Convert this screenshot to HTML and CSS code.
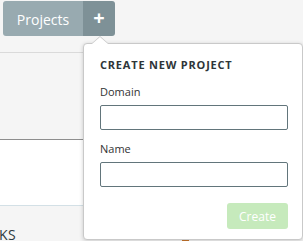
FILE: index.html
```html
<!DOCTYPE html>
<html>
<head>
<meta charset="utf-8">
<link rel="stylesheet" href="styles.css">
</head>
<body>
<div class="page">
  <div class="topbar">
    <div class="btn-group">
      <div class="btn btn-projects">Projects</div>
      <div class="btn btn-plus">+</div>
    </div>
  </div>
  <div class="band band-gray"></div>
  <div class="band band-white"></div>
  <div class="band band-bottom">
    <div class="tab-label">KS</div>
    <div class="legend">
      <span class="swatch"></span>
      <span class="legend-text">WWW HHHHHHH</span>
    </div>
  </div>

  <div class="popover">
    <div class="popover-title">Create new project</div>
    <label class="field-label">Domain</label>
    <div class="field-input"></div>
    <label class="field-label field-label-2">Name</label>
    <div class="field-input"></div>
    <div class="actions">
      <div class="btn-create">Create</div>
    </div>
  </div>
</div>
</body>
</html>
```

FILE: styles.css
```css
html, body {
  margin: 0;
  padding: 0;
}
body {
  width: 303px;
  height: 241px;
  overflow: hidden;
  background: #f5f5f5;
  font-family: "Open Sans", "Liberation Sans", sans-serif;
  color: #333;
}
.page {
  position: relative;
  width: 303px;
  height: 241px;
  overflow: hidden;
}
.topbar {
  padding: 1px 0 0 3px;
  height: 52px;
  box-sizing: border-box;
}
.btn-group {
  display: flex;
  height: 35px;
}
.btn {
  display: flex;
  align-items: center;
  justify-content: center;
  color: #fff;
}
.btn-projects {
  width: 80px;
  background: #98aab0;
  border-radius: 3px 0 0 3px;
  font-size: 14px;
  padding-top: 1px;
  box-sizing: border-box;
}
.btn-plus {
  width: 32px;
  background: #7e9197;
  border-radius: 0 3px 3px 0;
  font-size: 20px;
  font-weight: 700;
  line-height: 1;
  padding-bottom: 1px;
  box-sizing: border-box;
}
.band-gray {
  height: 86px;
  border-top: 1px solid #dadada;
  border-bottom: 1px solid #8e8e8e;
}
.band-white {
  height: 65px;
  background: #fff;
  border-bottom: 1px solid #d3e0e6;
}
.band-bottom {
  display: flex;
  align-items: flex-start;
  height: 40px;
}
.tab-label {
  width: 183px;
  padding-top: 21px;
  font-size: 14px;
  line-height: 16px;
  letter-spacing: 0.5px;
  color: #2d3a40;
  margin-left: -1px;
}
.legend {
  display: flex;
  align-items: flex-start;
  padding-top: 34px;
}
.swatch {
  width: 7px;
  height: 7px;
  background: #c9762c;
  margin-right: 13px;
}
.legend-text {
  font-size: 11px;
  color: #3a4a52;
  line-height: 11px;
}

.popover {
  position: absolute;
  left: 83px;
  top: 43px;
  width: 220px;
  height: 197px;
  box-sizing: border-box;
  background: #fff;
  border: 1px solid #c9c9c9;
  border-radius: 4px;
  box-shadow: 0 1px 4px rgba(0, 0, 0, 0.18);
  padding: 13px 14px 0 16px;
}
.popover::before,
.popover::after {
  content: "";
  position: absolute;
  left: 7px;
  border-style: solid;
  border-color: transparent;
}
.popover::before {
  top: -8px;
  border-width: 0 9px 8px 9px;
  border-bottom-color: #c9c9c9;
}
.popover::after {
  top: -7px;
  left: 8px;
  border-width: 0 8px 7px 8px;
  border-bottom-color: #fff;
}
.popover-title {
  font-size: 11px;
  font-weight: 700;
  text-transform: uppercase;
  letter-spacing: 0.8px;
  line-height: 15px;
  color: #2e3538;
}
.field-label {
  display: block;
  margin-top: 12px;
  font-size: 11px;
  line-height: 15px;
  color: #333;
}
.field-label-2 {
  margin-top: 11px;
}
.field-input {
  margin-top: 6px;
  width: 188px;
  height: 25px;
  box-sizing: border-box;
  border: 1px solid #62757b;
  border-radius: 2px;
  background: #fff;
}
.actions {
  display: flex;
  justify-content: flex-end;
  width: 188px;
  margin-top: 16px;
}
.btn-create {
  width: 61px;
  height: 26px;
  display: flex;
  align-items: center;
  justify-content: center;
  background: #c6eabc;
  border-radius: 3px;
  color: #fff;
  font-size: 12px;
}
```
